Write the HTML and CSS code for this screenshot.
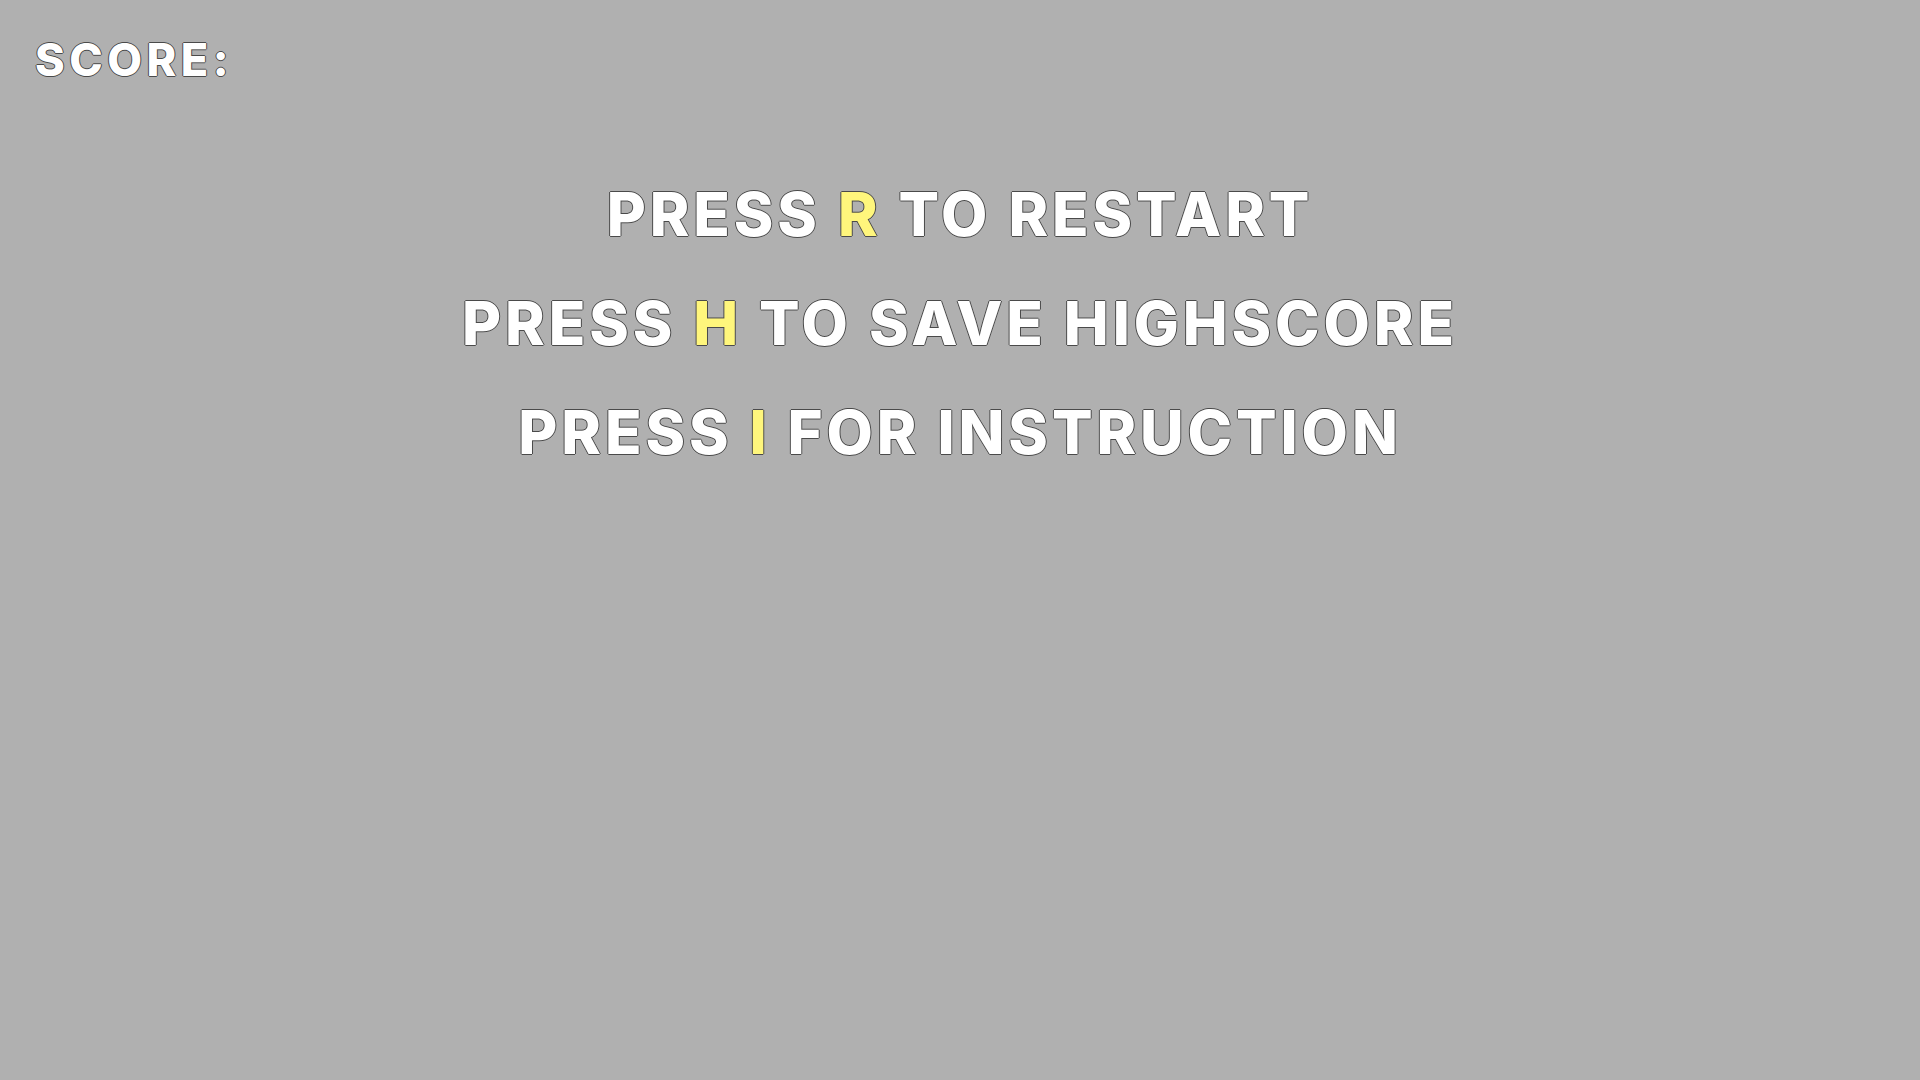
FILE: index.html
```html
<!DOCTYPE html>
<html>
<head>
<meta charset="utf-8">
<link rel="stylesheet" href="styles.css">
</head>
<body>
<div class="screen">
  <div class="score">SCORE:</div>
  <div class="menu">
    <div class="line">PRESS <span class="key">R</span> TO RESTART</div>
    <div class="line">PRESS <span class="key">H</span> TO SAVE HIGHSCORE</div>
    <div class="line">PRESS <span class="key">I</span> FOR INSTRUCTION</div>
  </div>
</div>
</body>
</html>
```
FILE: styles.css
```css
html, body {
  margin: 0;
  padding: 0;
  background: #b0b0b0;
}
.screen {
  width: 1920px;
  height: 1080px;
  font-family: "Inter", "DejaVu Sans", sans-serif;
  font-weight: 800;
  color: #ffffff;
  text-shadow: 1px 0 0 #4a4a4a, -1px 0 0 #4a4a4a, 0 1px 0 #4a4a4a, 0 -1px 0 #4a4a4a;
}
.score {
  padding: 30px 0 0 35px;
  font-size: 45px;
  line-height: 60px;
  letter-spacing: 4.5px;
}
.menu {
  margin-top: 84px;
  display: flex;
  flex-direction: column;
  align-items: center;
  gap: 29px;
}
.line {
  font-size: 60px;
  line-height: 80px;
  letter-spacing: 3.9px;
}
.key {
  color: #fff67c;
}
```
